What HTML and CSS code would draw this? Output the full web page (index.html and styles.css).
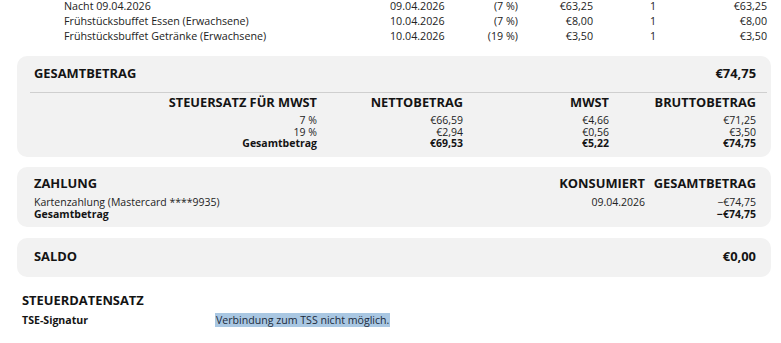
FILE: index.html
```html
<!DOCTYPE html>
<html lang="de">
<head>
<meta charset="utf-8">
<title>Rechnung</title>
<link rel="stylesheet" href="styles.css">
</head>
<body>
<div class="items">
  <div class="item-row">
    <span class="c-desc">Nacht 09.04.2026</span>
    <span class="c-date">09.04.2026</span>
    <span class="c-tax">(7 %)</span>
    <span class="c-price">€63,25</span>
    <span class="c-qty">1</span>
    <span class="c-total">€63,25</span>
  </div>
  <div class="item-row">
    <span class="c-desc">Frühstücksbuffet Essen (Erwachsene)</span>
    <span class="c-date">10.04.2026</span>
    <span class="c-tax">(7 %)</span>
    <span class="c-price">€8,00</span>
    <span class="c-qty">1</span>
    <span class="c-total">€8,00</span>
  </div>
  <div class="item-row">
    <span class="c-desc">Frühstücksbuffet Getränke (Erwachsene)</span>
    <span class="c-date">10.04.2026</span>
    <span class="c-tax">(19 %)</span>
    <span class="c-price">€3,50</span>
    <span class="c-qty">1</span>
    <span class="c-total">€3,50</span>
  </div>
</div>

<section class="card card-total">
  <div class="card-head">
    <span class="title">GESAMTBETRAG</span>
    <span class="title">€74,75</span>
  </div>
  <hr class="divider">
  <div class="tax-grid">
    <span class="th">STEUERSATZ FÜR MWST</span>
    <span class="th">NETTOBETRAG</span>
    <span class="th">MWST</span>
    <span class="th">BRUTTOBETRAG</span>
    <span class="td first">7 %</span>
    <span class="td first">€66,59</span>
    <span class="td first">€4,66</span>
    <span class="td first">€71,25</span>
    <span class="td">19 %</span>
    <span class="td">€2,94</span>
    <span class="td">€0,56</span>
    <span class="td">€3,50</span>
    <span class="td strong">Gesamtbetrag</span>
    <span class="td strong">€69,53</span>
    <span class="td strong">€5,22</span>
    <span class="td strong">€74,75</span>
  </div>
</section>

<section class="card card-pay">
  <div class="pay-grid">
    <span class="title">ZAHLUNG</span>
    <span class="title right">KONSUMIERT</span>
    <span class="title right">GESAMTBETRAG</span>
    <span class="td left first">Kartenzahlung (Mastercard ****9935)</span>
    <span class="td first">09.04.2026</span>
    <span class="td first">−€74,75</span>
    <span class="td left strong">Gesamtbetrag</span>
    <span class="td"></span>
    <span class="td strong">−€74,75</span>
  </div>
</section>

<section class="card card-saldo">
  <div class="card-head">
    <span class="title">SALDO</span>
    <span class="title">€0,00</span>
  </div>
</section>

<section class="tse">
  <div class="title">STEUERDATENSATZ</div>
  <div class="tse-row">
    <span class="tse-label">TSE-Signatur</span>
    <span class="tse-value"><mark class="sel">Verbindung zum TSS nicht möglich.</mark></span>
  </div>
</section>
</body>
</html>
```

FILE: styles.css
```css
html, body {
  margin: 0;
  padding: 0;
  background: #ffffff;
}

body {
  font-family: "Open Sans", "Noto Sans", "DejaVu Sans", sans-serif;
  color: #1c1c1c;
  width: 781px;
  height: 343px;
  overflow: hidden;
}

.items {
  padding-left: 64px;
  font-size: 10.7px;
  color: #222;
}

.item-row {
  display: grid;
  grid-template-columns: 326px 80px 48px 75px 120px 54px;
  height: 15px;
  line-height: 12px;
  white-space: nowrap;
}

.c-tax, .c-price, .c-total { text-align: right; }
.c-qty { text-align: center; }

.card {
  margin-left: 17px;
  width: 754px;
  box-sizing: border-box;
  background: #f2f2f2;
  border-radius: 10px;
  padding: 0 15px 0 17px;
}

.title {
  font-weight: 700;
  font-size: 12.9px;
  line-height: 16px;
  color: #141414;
}

.card-head {
  display: flex;
  justify-content: space-between;
}

.card-total {
  margin-top: 11px;
  padding-top: 9px;
  height: 101px;
}

.divider {
  border: 0;
  border-top: 1px solid #cfcfcf;
  margin: 11px -11px 0 -4px;
}

.tax-grid {
  display: grid;
  grid-template-columns: 283px 146px 146px 147px;
  text-align: right;
  white-space: nowrap;
}

.th {
  font-weight: 700;
  font-size: 12.8px;
  line-height: 16px;
  padding-top: 1px;
  color: #141414;
}

.td {
  font-size: 10.5px;
  line-height: 11.5px;
  color: #222;
}

.tax-grid .td.first { padding-top: 5px; }

.strong {
  font-weight: 700;
  color: #141414;
}

.card-pay {
  margin-top: 10px;
  padding-top: 8px;
  height: 60px;
}

.pay-grid {
  display: grid;
  grid-template-columns: 1fr auto 111px;
  text-align: right;
  white-space: nowrap;
}

.pay-grid .left, .pay-grid .title:first-child { text-align: left; }

.pay-grid .td.first { padding-top: 6px; }

.card-saldo {
  margin-top: 11px;
  padding-top: 10px;
  height: 39px;
}

.tse {
  padding: 15px 0 0 22px;
}

.tse .title {
  font-size: 12.9px;
  line-height: 16px;
}

.tse-row {
  display: grid;
  grid-template-columns: 193px auto;
  margin-top: 6px;
  font-size: 10.6px;
  line-height: 12px;
  justify-content: start;
}

.tse-label {
  font-weight: 700;
  color: #141414;
}

.sel {
  background: #a9c7e2;
  color: #1c2a3a;
  padding: 0 1px;
}
```
